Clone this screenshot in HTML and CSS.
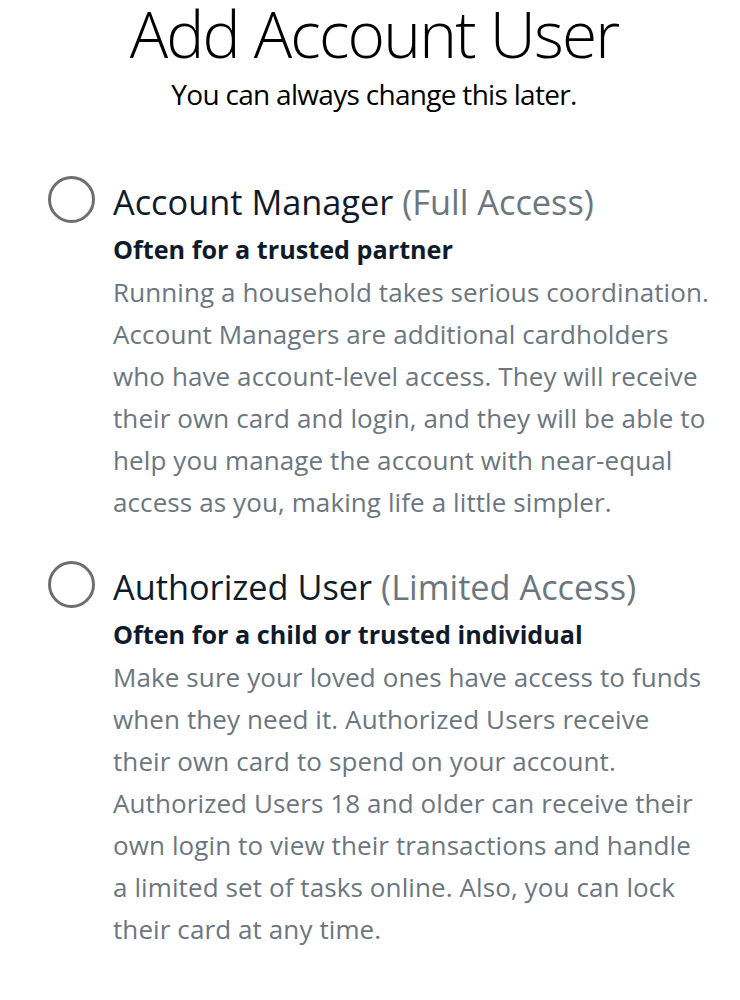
FILE: index.html
```html
<!DOCTYPE html>
<html lang="en">
<head>
  <meta charset="UTF-8">
  <meta name="viewport" content="width=device-width, initial-scale=1.0">
  <title>Add Account User</title>
  <link rel="stylesheet" href="styles.css">
</head>
<body>
  <div class="page">
    <header class="intro">
      <h1>Add Account User</h1>
      <p class="subtitle">You can always change this later.</p>
    </header>

    <div class="options">
      <label class="option">
        <span class="radio"></span>
        <span class="option-text">
          <span class="option-title">Account Manager <span class="access">(Full Access)</span></span>
          <span class="option-lead">Often for a trusted partner</span>
          <span class="option-desc">Running a household takes serious coordination. Account Managers are additional cardholders who have account-level access. They will receive their own card and login, and they will be able to help you manage the account with near-equal access as you, making life a little simpler.</span>
        </span>
      </label>

      <label class="option">
        <span class="radio"></span>
        <span class="option-text">
          <span class="option-title">Authorized User <span class="access">(Limited Access)</span></span>
          <span class="option-lead">Often for a child or trusted individual</span>
          <span class="option-desc">Make sure your loved ones have access to funds when they need it. Authorized Users receive their own card to spend on your account. Authorized Users 18 and older can receive their own login to view their transactions and handle a limited set of tasks online. Also, you can lock their card at any time.</span>
        </span>
      </label>
    </div>
  </div>
</body>
</html>
```

FILE: styles.css
```css
body {
  margin: 0;
  padding: 0;
  background: #fff;
  font-family: 'Open Sans', 'Noto Sans', sans-serif;
  color: #0f1b2a;
}

.page {
  width: 748px;
}

.intro {
  text-align: center;
}

h1 {
  margin: 0;
  font-size: 64px;
  font-weight: 300;
  letter-spacing: -1.8px;
  line-height: 68px;
  color: #000;
}

.subtitle {
  margin: 9px 0 0;
  font-size: 28px;
  letter-spacing: -0.7px;
  line-height: 34px;
  color: #000;
}

.options {
  margin-top: 65px;
  padding-left: 48px;
  display: flex;
  flex-direction: column;
  gap: 38px;
}

.option {
  display: flex;
  gap: 18px;
  align-items: flex-start;
}

.radio {
  flex: none;
  width: 41px;
  height: 41px;
  border: 3px solid #6e6e6e;
  border-radius: 50%;
}

.option-text {
  width: 598px;
  display: flex;
  flex-direction: column;
}

.option-title {
  font-size: 34.3px;
  line-height: 52px;
}

.access {
  color: #6b7680;
}

.option-lead {
  margin-top: 3px;
  font-size: 25.2px;
  font-weight: 700;
  line-height: 36px;
}

.option-desc {
  margin-top: 4px;
  font-size: 26px;
  letter-spacing: 0.1px;
  line-height: 42px;
  color: #6b7680;
}
```
